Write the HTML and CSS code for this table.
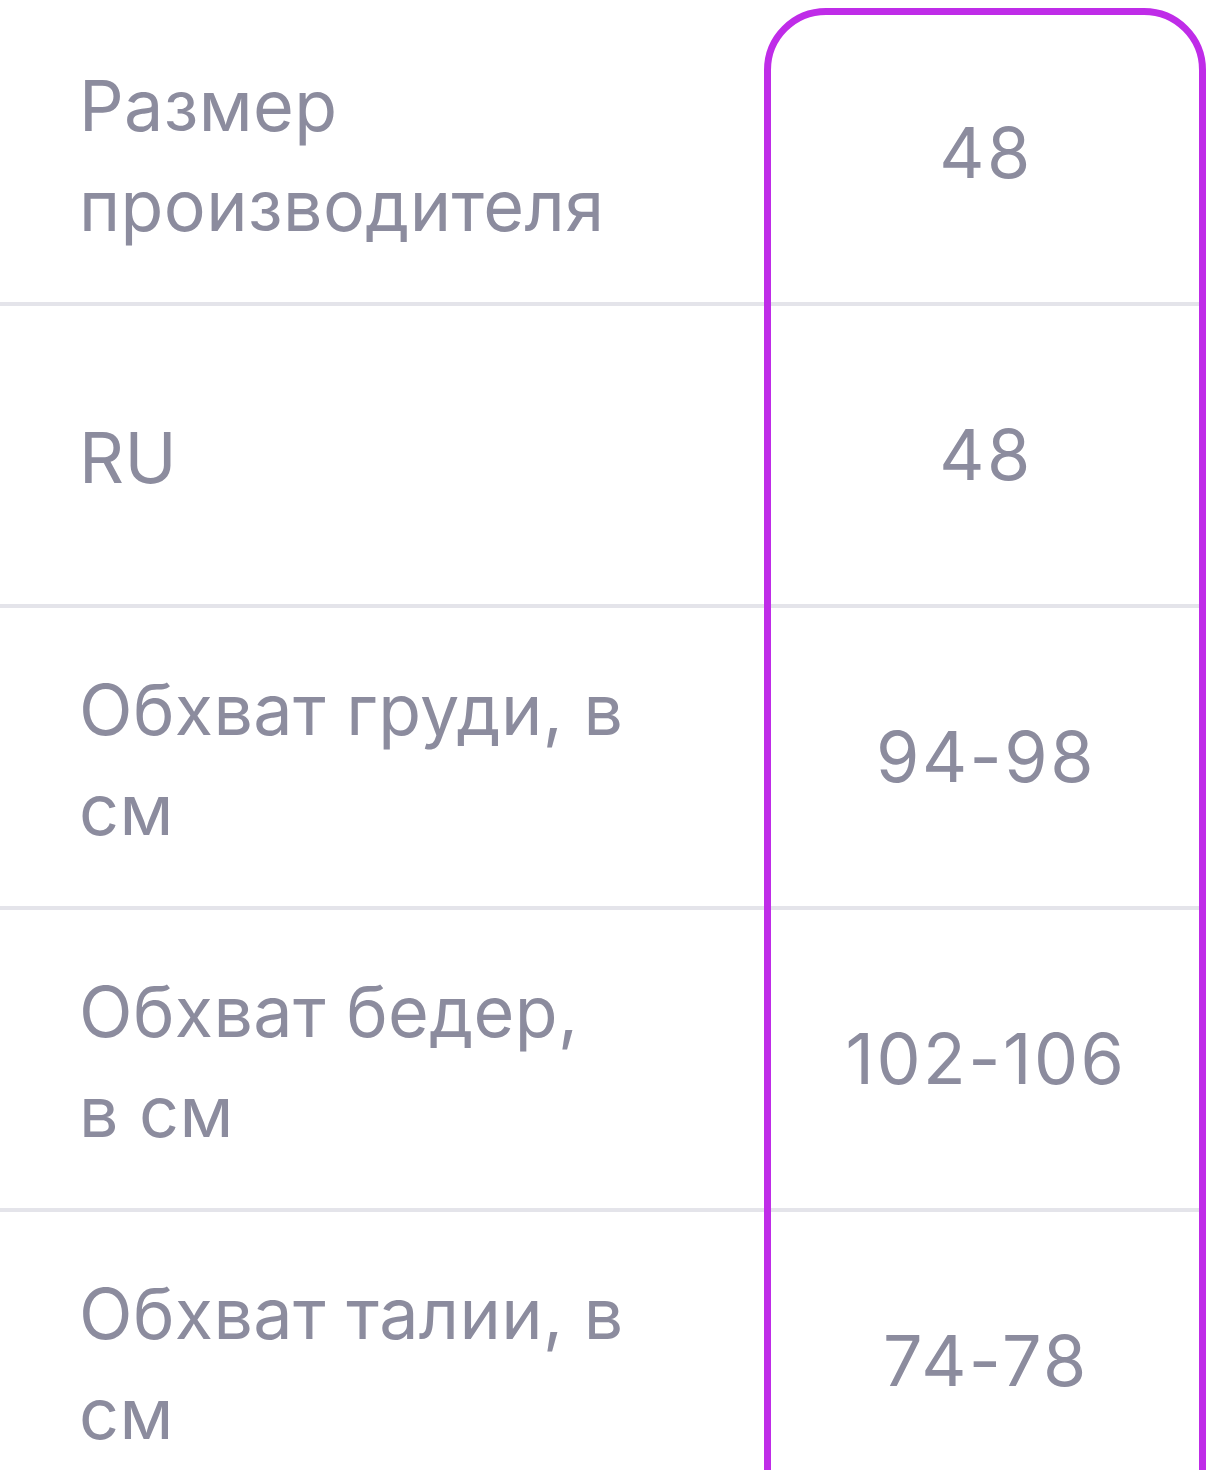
FILE: index.html
```html
<!DOCTYPE html>
<html lang="ru">
<head>
<meta charset="utf-8">
<title>Таблица размеров</title>
<link rel="stylesheet" href="styles.css">
</head>
<body>
<div class="size-table">
  <div class="cell label"><span class="label-text">Размер производителя</span></div>
  <div class="cell value">48</div>
  <div class="cell label"><span class="label-text">RU</span></div>
  <div class="cell value">48</div>
  <div class="cell label"><span class="label-text">Обхват груди, в см</span></div>
  <div class="cell value">94-98</div>
  <div class="cell label"><span class="label-text">Обхват бедер, в см</span></div>
  <div class="cell value">102-106</div>
  <div class="cell label"><span class="label-text">Обхват талии, в см</span></div>
  <div class="cell value">74-78</div>
</div>
</body>
</html>
```
FILE: styles.css
```css
html, body {
  margin: 0;
  padding: 0;
  background: #ffffff;
}

body {
  font-family: Inter, "Noto Sans", sans-serif;
  color: #8c8c9e;
  overflow: hidden;
}

.size-table {
  position: relative;
  display: grid;
  grid-template-columns: 764px 1fr;
  padding-top: 4px;
}

.size-table::after {
  content: "";
  position: absolute;
  left: 764px;
  right: 0;
  top: 8px;
  bottom: -80px;
  border: 7px solid #bf2ce8;
  border-radius: 62px;
  pointer-events: none;
}

.cell {
  height: 298px;
  border-bottom: 4px solid #e4e4ea;
  display: flex;
  align-items: center;
  font-size: 70px;
  line-height: 100px;
}

.label {
  padding-left: 79px;
}

.label-text {
  max-width: 548px;
  padding-top: 5px;
  letter-spacing: 0.4px;
}

.value {
  justify-content: center;
  padding-left: 9px;
  padding-right: 7px;
  letter-spacing: 2.5px;
}
```
